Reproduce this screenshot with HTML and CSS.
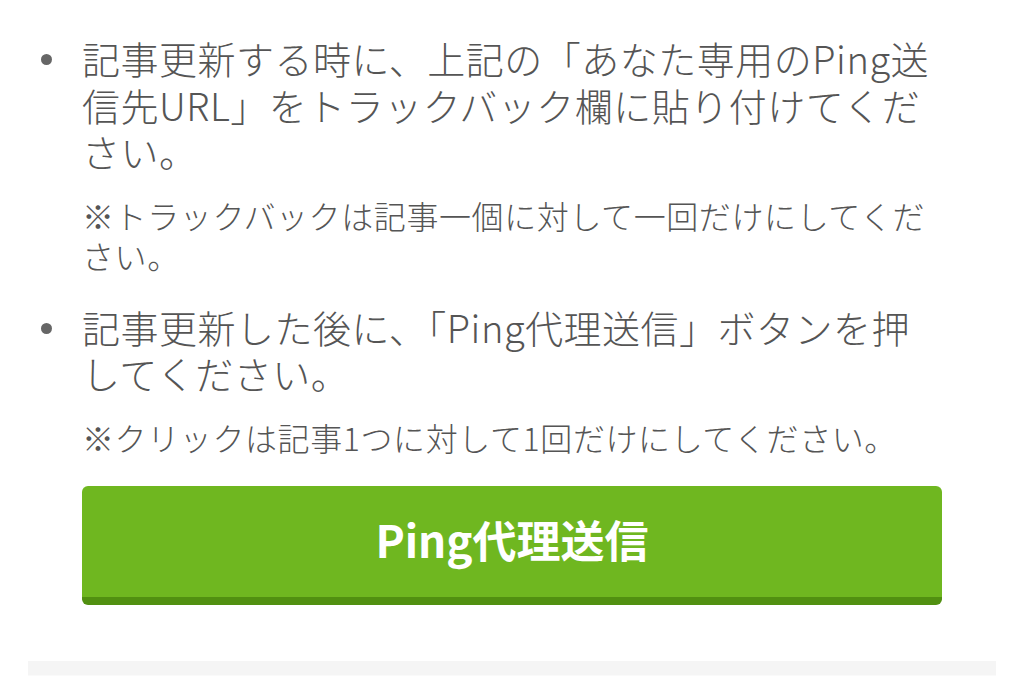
FILE: index.html
```html
<!DOCTYPE html>
<html lang="ja">
<head>
<meta charset="utf-8">
<title>Ping代理送信</title>
<link rel="stylesheet" href="styles.css">
</head>
<body>
<div class="page">
  <ul class="steps">
    <li class="step">
      <p class="step-text">記事更新する時に、上記の「あなた専用のPing送信先URL」をトラックバック欄に貼り付けてください。</p>
      <p class="note">※トラックバックは記事一個に対して一回だけにしてください。</p>
    </li>
    <li class="step">
      <p class="step-text">記事更新した後に、「Ping代理送信」ボタンを押してください。</p>
      <p class="note">※クリックは記事1つに対して1回だけにしてください。</p>
    </li>
  </ul>
  <div class="actions">
    <button class="ping-btn" type="button">Ping代理送信</button>
  </div>
  <div class="footer-bar"></div>
</div>
</body>
</html>
```

FILE: styles.css
```css
* { box-sizing: border-box; }
html, body {
  margin: 0;
  padding: 0;
  background: #fff;
}
body {
  font-family: "Noto Sans CJK JP", "Noto Sans", sans-serif;
  color: #555;
  overflow: hidden;
}
.page {
  width: 1024px;
  height: 676px;
  padding-top: 35px;
  display: flex;
  flex-direction: column;
}
.steps {
  list-style: none;
  margin: 0;
  padding: 0 82px 0 82px;
  display: flex;
  flex-direction: column;
  gap: 29px;
}
.step {
  position: relative;
}
.step::before {
  content: "";
  position: absolute;
  left: -41px;
  top: 19px;
  width: 11px;
  height: 11px;
  border-radius: 50%;
  background: #666;
}
.step-text {
  margin: 0;
  font-size: 38px;
  font-weight: 300;
  line-height: 46.5px;
  letter-spacing: 0.5px;
}
.note {
  margin: 20px 0 0;
  font-size: 32px;
  font-weight: 300;
  line-height: 40px;
  letter-spacing: 0.6px;
}
.actions {
  padding: 29px 82px 0;
}
.ping-btn {
  display: block;
  width: 100%;
  height: 119px;
  border: none;
  border-bottom: 8px solid #519011;
  border-radius: 6px;
  background: #6fb720;
  color: #fff;
  font-family: "Noto Sans CJK JP", "Noto Sans", sans-serif;
  font-size: 44px;
  font-weight: 700;
  padding: 0 0 4px;
}
.footer-bar {
  margin: 56px 28px 0;
  height: 16px;
  background: #f5f5f5;
  border-bottom: 1px solid #fafafa;
}
```
